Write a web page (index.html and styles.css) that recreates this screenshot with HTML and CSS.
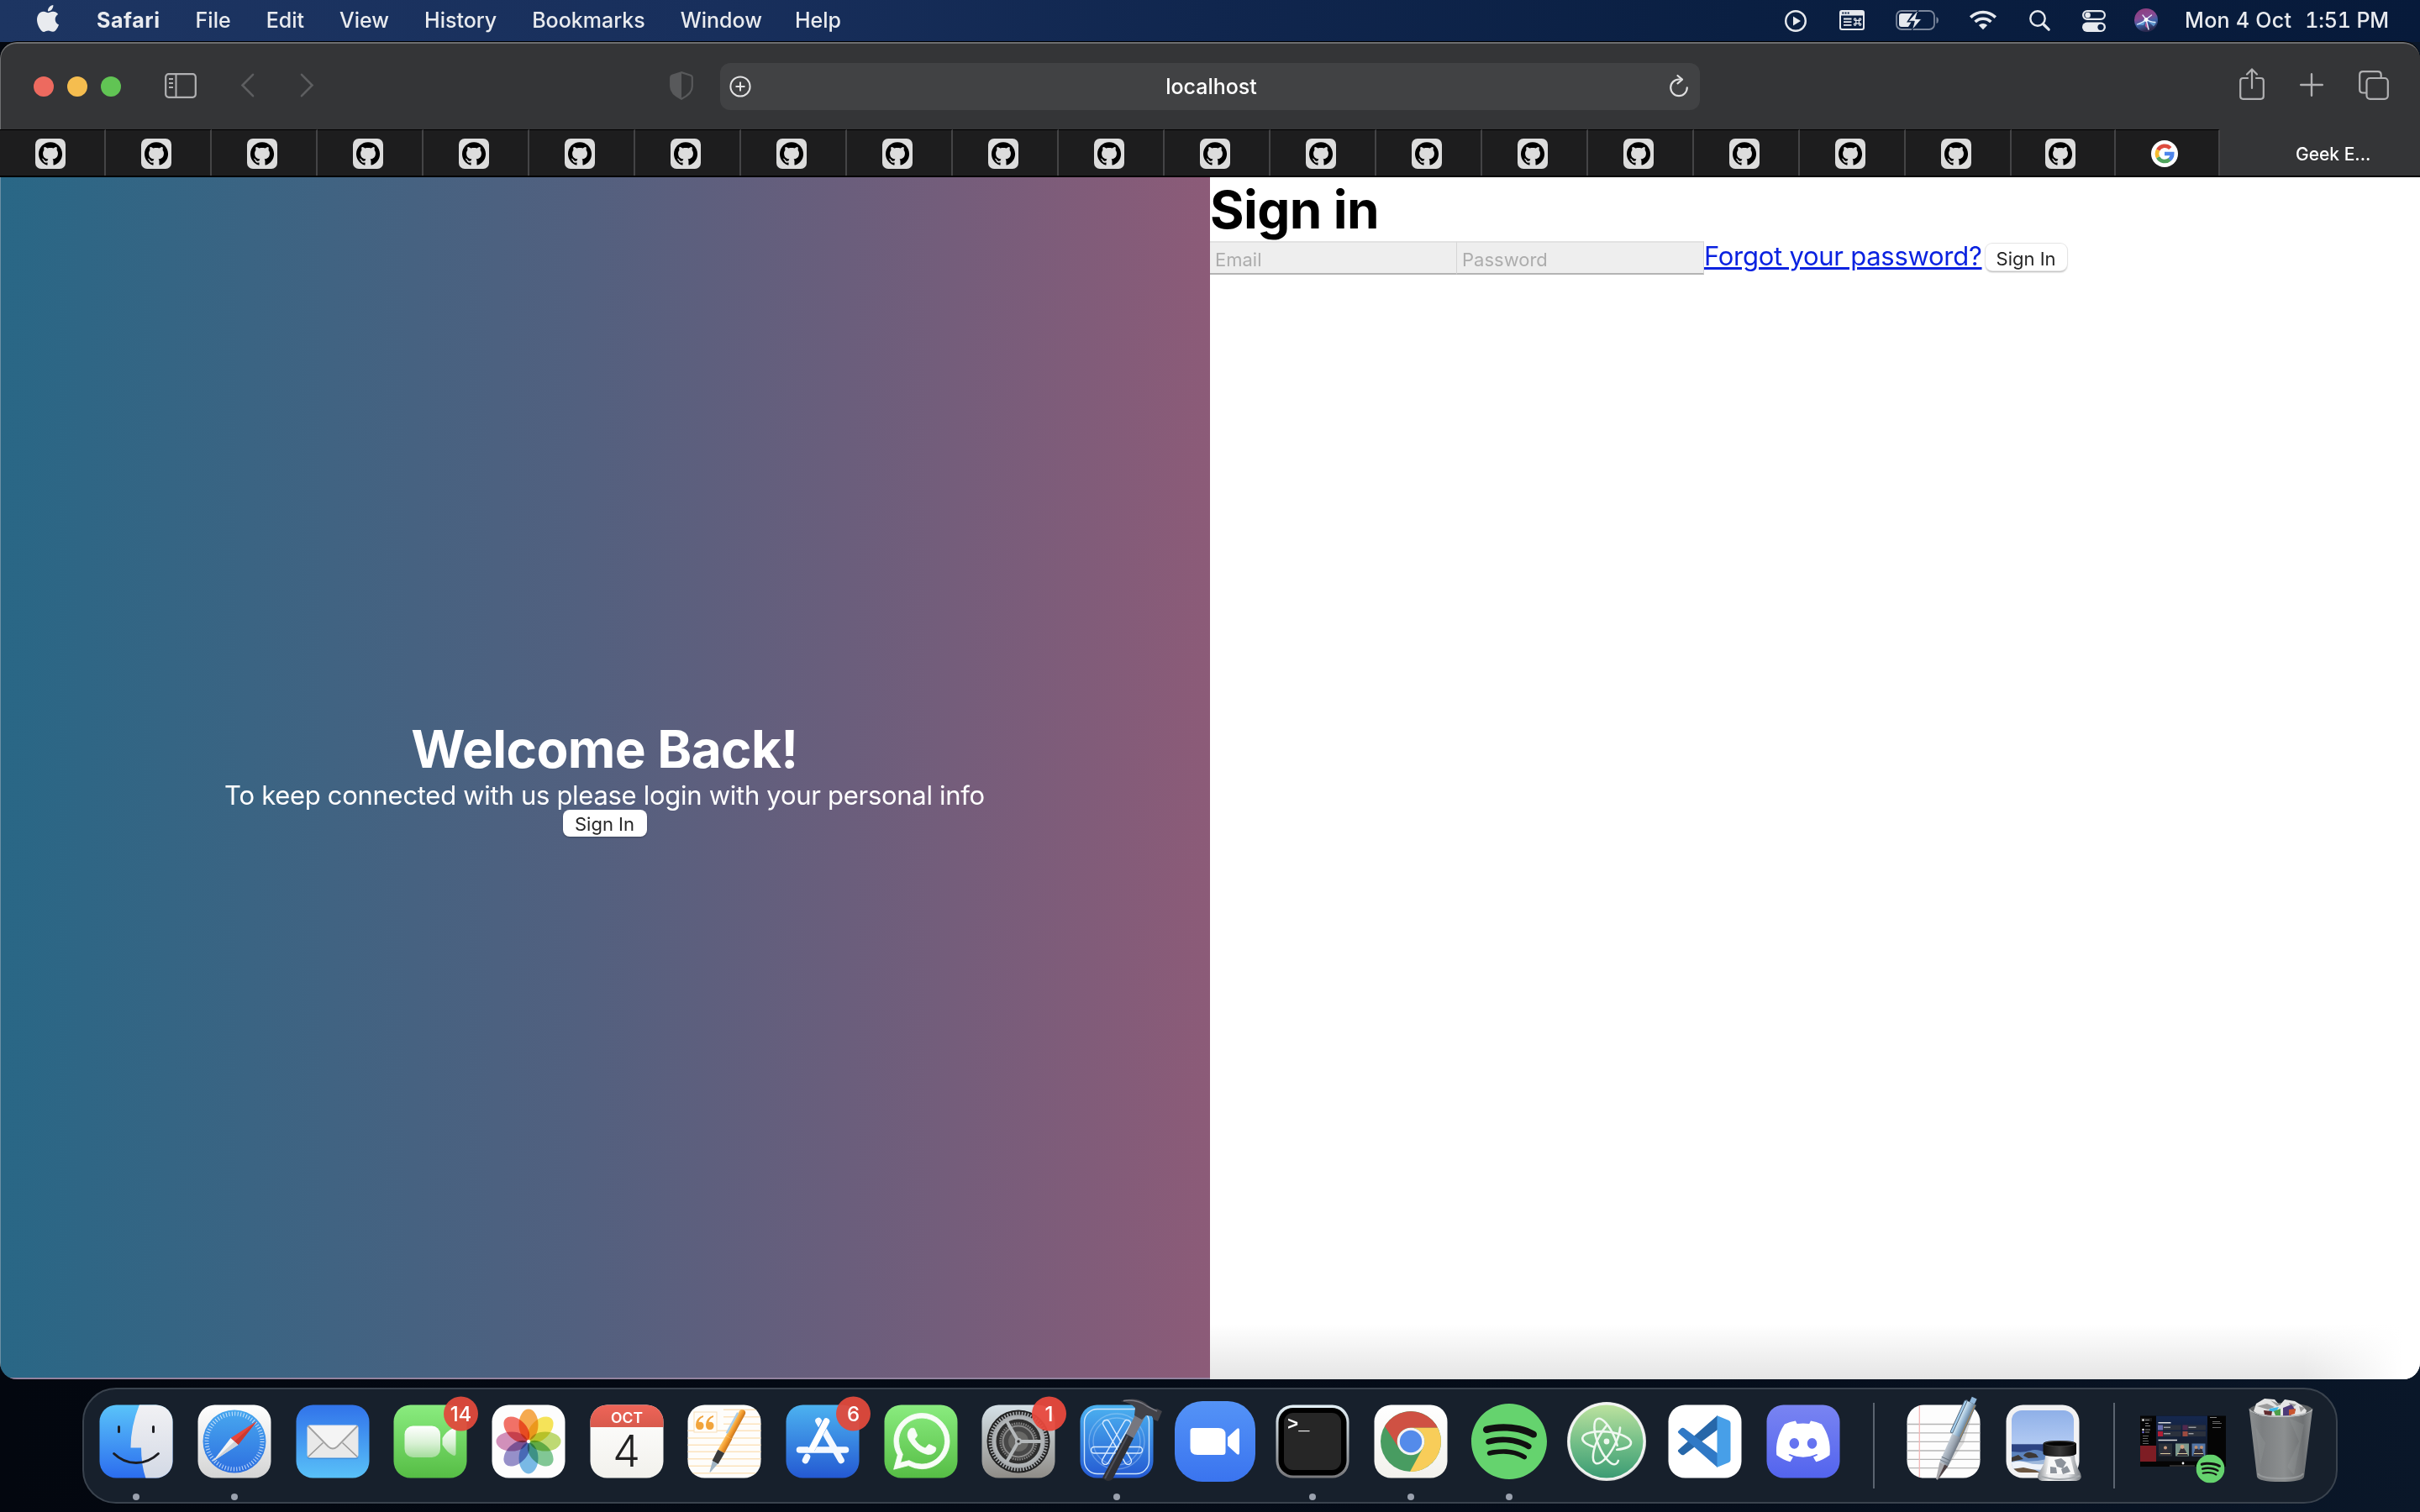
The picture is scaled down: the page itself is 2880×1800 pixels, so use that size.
FILE: index.html
```html
<!DOCTYPE html>
<html lang="en">
<head>
<meta charset="utf-8">
<title>Geek E...</title>
<link rel="stylesheet" href="styles.css">
</head>
<body>
<svg class="defs" width="0" height="0" aria-hidden="true">
  <defs>
    <symbol id="octocat" viewBox="0 0 36 36">
      <rect width="36" height="36" rx="7" fill="#dcdcdc"/>
      <path transform="translate(4 3.9) scale(1.17)" d="M12 .297c-6.63 0-12 5.373-12 12 0 5.303 3.438 9.8 8.205 11.385.6.113.82-.258.82-.577 0-.285-.01-1.04-.015-2.04-3.338.724-4.042-1.61-4.042-1.61C4.422 18.07 3.633 17.7 3.633 17.7c-1.087-.744.084-.729.084-.729 1.205.084 1.838 1.236 1.838 1.236 1.07 1.835 2.809 1.305 3.495.998.108-.776.417-1.305.76-1.605-2.665-.3-5.466-1.332-5.466-5.93 0-1.31.465-2.38 1.235-3.22-.135-.303-.54-1.523.105-3.176 0 0 1.005-.322 3.3 1.23.96-.267 1.98-.399 3-.405 1.02.006 2.04.138 3 .405 2.28-1.552 3.285-1.23 3.285-1.23.645 1.653.24 2.873.12 3.176.765.84 1.23 1.91 1.23 3.22 0 4.61-2.805 5.625-5.475 5.92.42.36.81 1.096.81 2.22 0 1.606-.015 2.896-.015 3.286 0 .315.21.69.825.57C20.565 22.092 24 17.592 24 12.297c0-6.627-5.373-12-12-12"/>
    </symbol>
    <symbol id="spotify" viewBox="0 0 24 24">
      <circle cx="12" cy="12" r="11.6" fill="#111"/>
      <path fill="#65d36e" d="M12 0C5.4 0 0 5.4 0 12s5.4 12 12 12 12-5.4 12-12S18.66 0 12 0zm5.521 17.34c-.24.359-.66.48-1.021.24-2.82-1.74-6.36-2.101-10.561-1.141-.418.122-.779-.179-.899-.539-.12-.421.18-.78.54-.9 4.56-1.021 8.52-.6 11.64 1.32.42.18.479.659.301 1.02zm1.44-3.3c-.301.42-.841.6-1.262.3-3.239-1.98-8.159-2.58-11.939-1.38-.479.12-1.02-.12-1.14-.6-.12-.48.12-1.021.6-1.141C9.6 9.9 15 10.561 18.72 12.84c.361.181.54.78.241 1.2zm.12-3.36C15.24 8.4 8.82 8.16 5.16 9.301c-.6.179-1.2-.181-1.38-.721-.18-.601.18-1.2.72-1.381 4.26-1.26 11.28-1.02 15.721 1.621.539.3.719 1.02.419 1.56-.299.421-1.02.599-1.559.3z"/>
    </symbol>
    <linearGradient id="gFinder" x2="0" y2="1"><stop stop-color="#5ac4fa"/><stop offset="1" stop-color="#2b6cee"/></linearGradient>
    <linearGradient id="gFace" x2="0" y2="1"><stop stop-color="#f1f1f4"/><stop offset="1" stop-color="#d3d9e5"/></linearGradient>
    <linearGradient id="gWhite" x2="0" y2="1"><stop stop-color="#fff"/><stop offset="1" stop-color="#d4d4d4"/></linearGradient>
    <linearGradient id="gPaper" x2="0" y2="1"><stop stop-color="#fff"/><stop offset="1" stop-color="#f2f1ec"/></linearGradient>
    <linearGradient id="gCompass" x2="0" y2="1"><stop stop-color="#48a8ef"/><stop offset="1" stop-color="#2d6fe0"/></linearGradient>
    <linearGradient id="gMail" x2="0" y2="1"><stop stop-color="#3173ea"/><stop offset="1" stop-color="#59c1f8"/></linearGradient>
    <linearGradient id="gGreen" x2="0" y2="1"><stop stop-color="#8aec7f"/><stop offset="1" stop-color="#56bd45"/></linearGradient>
    <linearGradient id="gCam" x2="0" y2="1"><stop stop-color="#fff"/><stop offset=".55" stop-color="#d9f1d5"/><stop offset="1" stop-color="#a5dd9c"/></linearGradient>
    <linearGradient id="gRed" x2="0" y2="1"><stop stop-color="#ef6559"/><stop offset="1" stop-color="#d85a4c"/></linearGradient>
    <linearGradient id="gStore" x2="0" y2="1"><stop stop-color="#4cb2f0"/><stop offset="1" stop-color="#2459d2"/></linearGradient>
    <linearGradient id="gZoom" x2="0" y2="1"><stop stop-color="#5493f7"/><stop offset="1" stop-color="#3a74ef"/></linearGradient>
    <linearGradient id="gPrefs" x2="0" y2="1"><stop stop-color="#d5e1e8"/><stop offset="1" stop-color="#8f8c87"/></linearGradient>
    <linearGradient id="gMetal" x2="0" y2="1"><stop stop-color="#e3f0f7"/><stop offset="1" stop-color="#77777a"/></linearGradient>
    <linearGradient id="gAtom" x2="0" y2="1"><stop stop-color="#bce29f"/><stop offset=".55" stop-color="#6fbc86"/><stop offset="1" stop-color="#3c9c74"/></linearGradient>
    <linearGradient id="gDiscord" x2="0" y2="1"><stop stop-color="#7984f2"/><stop offset="1" stop-color="#5364ee"/></linearGradient>
    <linearGradient id="gPen"><stop stop-color="#fbc667"/><stop offset=".5" stop-color="#f39b2d"/><stop offset="1" stop-color="#c8741c"/></linearGradient>
    <linearGradient id="gSteel"><stop stop-color="#d8ecf8"/><stop offset=".5" stop-color="#8fb0cc"/><stop offset="1" stop-color="#5b6b7b"/></linearGradient>
    <linearGradient id="gGrip"><stop stop-color="#c2cbd5"/><stop offset=".6" stop-color="#98a2ae"/><stop offset="1" stop-color="#6c7580"/></linearGradient>
    <linearGradient id="gSky" x2="0" y2="1"><stop stop-color="#8fb0e8"/><stop offset="1" stop-color="#b3cbf3"/></linearGradient>
    <linearGradient id="gBin"><stop stop-color="#8c8f91"/><stop offset=".2" stop-color="#7c7f81"/><stop offset=".55" stop-color="#8c8f90"/><stop offset=".85" stop-color="#6d7072"/><stop offset="1" stop-color="#8e9193"/></linearGradient>
    <linearGradient id="gGlass"><stop stop-color="#8b8f94"/><stop offset=".25" stop-color="#f1f1f1"/><stop offset=".7" stop-color="#e3e5e8"/><stop offset="1" stop-color="#777b80"/></linearGradient>
    <linearGradient id="gCap"><stop stop-color="#111"/><stop offset=".5" stop-color="#3b3b3b"/><stop offset="1" stop-color="#080808"/></linearGradient>
    <linearGradient id="gHero" x2="0" y2="1"><stop stop-color="#15284f"/><stop offset="1" stop-color="#14171d"/></linearGradient>
    <linearGradient id="gSiri" x2=".3" y2="1"><stop stop-color="#8c3a78"/><stop offset=".45" stop-color="#8a4a94"/><stop offset=".7" stop-color="#3c63a8"/><stop offset="1" stop-color="#2c2a50"/></linearGradient>
  </defs>
</svg>

<header class="menubar">
  <nav class="menus">
    <svg class="apple" width="26" height="32" viewBox="2.2 0 19.6 24"><path fill="#e9ebef" d="M12.152 6.896c-.948 0-2.415-1.078-3.96-1.04-2.04.027-3.91 1.183-4.961 3.014-2.117 3.675-.546 9.103 1.519 12.09 1.013 1.454 2.208 3.09 3.792 3.039 1.52-.065 2.09-.987 3.935-.987 1.831 0 2.35.987 3.96.948 1.637-.026 2.676-1.48 3.676-2.948 1.156-1.688 1.636-3.325 1.662-3.415-.039-.013-3.182-1.221-3.22-4.857-.026-3.04 2.48-4.494 2.597-4.559-1.429-2.09-3.623-2.324-4.39-2.376-2-.156-3.675 1.09-4.61 1.09zM15.53 3.83c.843-1.012 1.4-2.427 1.245-3.83-1.207.052-2.662.805-3.532 1.818-.78.896-1.454 2.338-1.273 3.714 1.338.104 2.715-.688 3.559-1.701"/></svg>
    <b class="m-app">Safari</b><span class="m-file">File</span><span class="m-edit">Edit</span><span class="m-view">View</span><span class="m-history">History</span><span class="m-bookmarks">Bookmarks</span><span class="m-window">Window</span><span class="m-help">Help</span>
  </nav>
  <div class="status">
    <svg width="26" height="26" viewBox="0 0 26 26"><circle cx="13" cy="13" r="11.8" fill="none" stroke="#e6e9ee" stroke-width="2.4"/><path d="M10 7.6 19 13l-9 5.4z" fill="#e6e9ee"/></svg>
    <svg class="s-keys" width="30" height="24" viewBox="0 0 30 24"><path fill="#e6e9ee" fill-rule="evenodd" d="M3 0h24a3 3 0 0 1 3 3v18a3 3 0 0 1-3 3H3a3 3 0 0 1-3-3V3a3 3 0 0 1 3-3zM2 6.6V20.500a1.500 1.500 0 0 0 1.500 1.500h23a1.500 1.500 0 0 0 1.500-1.500V6.600zM3.300 2.400v2h2v-2zM6.500 2.400v2h2v-2zM9.700 2.400v2h2v-2z"/><path d="M5 10.500h9.500M5 14.200h9.500M5 17.800h9.500" stroke="#e6e9ee" stroke-width="1.800"/><path d="M19.800 12.300h3.600v3.600h-3.600zM19.800 12.300h-1.200a1.200 1.200 0 1 1 1.200-1.200zM23.400 12.300v-1.200a1.200 1.200 0 1 1 1.200 1.200zM23.400 15.900h1.200a1.200 1.200 0 1 1-1.200 1.200zM19.800 15.900v1.200a1.200 1.200 0 1 1-1.200-1.200z" fill="none" stroke="#e6e9ee" stroke-width="1.200"/></svg>
    <svg class="s-battery" width="52" height="26" viewBox="0 0 52 26"><rect x="1" y="2" width="45" height="22" rx="6" fill="none" stroke="#7b879c" stroke-width="1.800"/><path d="M48.500 9v8q2.500-1 2.500-4t-2.500-4z" fill="#7b879c"/><path d="M7 5h13l-7 10.500h5.500L15 21H7q-3 0-3-3V8q0-3 3-3z" fill="#e6e9ee"/><path d="M27 .800 15 14.300h7.300L19.400 25 31 11.400h-7.300z" fill="#e6e9ee" stroke="#0a1f42" stroke-width="1"/></svg>
    <svg class="s-wifi" width="34" height="25" viewBox="0 0 34 25"><g fill="none" stroke="#e6e9ee" stroke-width="3.600"><path d="M2.200 9.600a21 21 0 0 1 29.600 0"/><path d="M7.600 15.100a13.300 13.300 0 0 1 18.800 0"/></g><path d="M17 24.200 11.900 19a7.200 7.200 0 0 1 10.200 0z" fill="#e6e9ee"/></svg>
    <svg class="s-search" width="25" height="25" viewBox="0 0 25 25"><circle cx="10" cy="10" r="8.700" fill="none" stroke="#e6e9ee" stroke-width="2.400"/><path d="m16.500 16.500 6.700 6.700" stroke="#e6e9ee" stroke-width="3.200" stroke-linecap="round"/></svg>
    <svg class="s-control" width="28" height="26" viewBox="0 0 28 26"><rect x="1.100" y="1.100" width="25.800" height="9.800" rx="4.900" fill="none" stroke="#e6e9ee" stroke-width="2.200"/><circle cx="6.600" cy="6" r="3.300" fill="#e6e9ee"/><rect y="14.600" width="28" height="11.400" rx="5.700" fill="#e6e9ee"/><circle cx="22" cy="20.300" r="3.600" fill="#0a1f42"/></svg>
    <svg class="s-siri" width="28" height="28" viewBox="0 0 28 28"><circle cx="14" cy="14" r="14" fill="url(#gSiri)"/><path d="M14 13 3 19.500l8 .500zM14 13l12 4.500-3 4z" fill="#6fb2e6" opacity=".75"/><path d="m14 13 3.500 12.500L13 21z" fill="#e0599a" opacity=".8"/><path d="M3.500 19Q11 16.500 14 13q4 3 11 3.500M14 13 10 8m4 5 6.500-5M14 13l3 12" fill="none" stroke="#e4f2ff" stroke-width="1.300" stroke-linecap="round"/><circle cx="14" cy="13.500" r="2.400" fill="#fff"/></svg>
    <span class="m-date">Mon 4 Oct</span><span class="m-time">1:51 PM</span>
  </div>
</header>

<main class="window">
  <div class="toolbar">
    <div class="tools-left">
      <i class="light red"></i><i class="light amber"></i><i class="light green"></i>
      <svg class="t-sidebar" width="38" height="30" viewBox="0 0 38 30" fill="none" stroke="#b1b1b3"><rect x="1.200" y="1.200" width="35.600" height="27.600" rx="3.500" stroke-width="2.200"/><path d="M13.500 1v28" stroke-width="2"/><path d="M5 7h5M5 12h5M5 17h5" stroke-width="1.800"/></svg>
      <svg class="t-back" width="17" height="29" viewBox="0 0 17 29"><path d="M15 1.800 2.500 14.500 15 27.200" fill="none" stroke="#5d5e60" stroke-width="2.600" stroke-linecap="round"/></svg>
      <svg class="t-fwd" width="17" height="29" viewBox="0 0 17 29"><path d="M2 1.800 14.500 14.500 2 27.200" fill="none" stroke="#5d5e60" stroke-width="2.600" stroke-linecap="round"/></svg>
    </div>
    <svg class="t-shield" width="28" height="34" viewBox="0 0 28 34"><path d="M14 1.200 3 4.800Q1.200 5.500 1.200 7.300V18q0 8.500 12.800 14.700Q26.800 26.500 26.800 18V7.300q0-1.800-1.800-2.500z" fill="none" stroke="#58595b" stroke-width="2.200"/><path d="M14 1 3 4.800Q1 5.500 1 7.300V18q0 8.500 13 15z" fill="#58595b"/></svg>
    <div class="address">
      <svg width="26" height="26" viewBox="0 0 26 26" fill="none" stroke="#e2e2e3"><circle cx="13" cy="13" r="11.600" stroke-width="2"/><path d="M13 7.500v11M7.500 13h11" stroke-width="2"/></svg>
      <span class="url">localhost</span>
      <svg width="26" height="28" viewBox="0 0 26 28"><path d="M14 5.500h-1a9.800 9.800 0 1 0 9.800 9.800" fill="none" stroke="#dededf" stroke-width="2.200" stroke-linecap="round"/><path d="m11.500 1 5.500 4.700-5.500 4.600" fill="none" stroke="#dededf" stroke-width="2.200" stroke-linecap="round" stroke-linejoin="round"/></svg>
    </div>
    <div class="tools-right">
      <svg class="t-share" width="30" height="38" viewBox="0 0 30 38" fill="none" stroke="#b1b1b3" stroke-width="2.200" stroke-linecap="round"><path d="M10 12H4.500q-3.300 0-3.300 3.300v18.200q0 3.300 3.300 3.300h21q3.300 0 3.300-3.300V15.300q0-3.300-3.300-3.300H20"/><path d="M15 24V2M9 7.500l6-6 6 6"/></svg>
      <svg class="t-plus" width="28" height="28" viewBox="0 0 28 28"><path d="M14 1.200v25.600M1.200 14h25.600" stroke="#b1b1b3" stroke-width="2.400" stroke-linecap="round"/></svg>
      <svg class="t-tabs" width="36" height="35" viewBox="0 0 36 35" fill="none" stroke="#b1b1b3" stroke-width="2.200"><rect x="9.500" y="9" width="25.300" height="24.800" rx="4"/><path d="M9 26.500H5.200q-4 0-4-4V5.200q0-4 4-4h17.500q4 0 4 4V9"/></svg>
    </div>
  </div>

  <div class="tabs">
    <div class="tab"><svg><use href="#octocat"/></svg></div><div class="tab"><svg><use href="#octocat"/></svg></div><div class="tab"><svg><use href="#octocat"/></svg></div><div class="tab"><svg><use href="#octocat"/></svg></div><div class="tab"><svg><use href="#octocat"/></svg></div><div class="tab"><svg><use href="#octocat"/></svg></div><div class="tab"><svg><use href="#octocat"/></svg></div><div class="tab"><svg><use href="#octocat"/></svg></div><div class="tab"><svg><use href="#octocat"/></svg></div><div class="tab"><svg><use href="#octocat"/></svg></div><div class="tab"><svg><use href="#octocat"/></svg></div><div class="tab"><svg><use href="#octocat"/></svg></div><div class="tab"><svg><use href="#octocat"/></svg></div><div class="tab"><svg><use href="#octocat"/></svg></div><div class="tab"><svg><use href="#octocat"/></svg></div><div class="tab"><svg><use href="#octocat"/></svg></div><div class="tab"><svg><use href="#octocat"/></svg></div><div class="tab"><svg><use href="#octocat"/></svg></div><div class="tab"><svg><use href="#octocat"/></svg></div>
    <div class="tab narrow"><svg><use href="#octocat"/></svg></div>
    <div class="tab narrow"><svg viewBox="0 0 36 36"><circle cx="18" cy="18" r="16" fill="#fff"/><g fill="none" stroke-width="4.600"><path d="M10.100 13.600A9.200 9.200 0 0 1 24.800 11.500" stroke="#dd4b3e"/><path d="M10.100 22.400a9.200 9.200 0 0 1 0-8.800" stroke="#f6bc2f"/><path d="M24.200 24.700a9.200 9.200 0 0 1-14.100-2.300" stroke="#4fa45c"/><path d="M18 18h9.200a9.200 9.200 0 0 1-3.200 7" stroke="#4f86ec"/></g></svg></div>
    <div class="tab active"><span>Geek E...</span></div>
  </div>

  <div class="page">
    <section class="welcome">
      <h1>Welcome Back!</h1>
      <p>To keep connected with us please login with your personal info</p>
      <button class="btn btn-welcome">Sign In</button>
    </section>
    <section class="signin">
      <h1>Sign in</h1>
      <div class="form">
        <div class="field"><span class="f-email">Email</span></div><div class="field"><span class="f-pass">Password</span></div><a>Forgot your password?</a><button class="btn btn-form">Sign In</button>
      </div>
    </section>
  </div>
</main>

<footer class="dock">
  <div class="item running"><svg viewBox="-58 -60 116 120">
    <clipPath id="sq"><rect x="-43.500" y="-43.500" width="87" height="87" rx="20"/></clipPath>
    <g clip-path="url(#sq)"><rect x="-44" y="-44" width="88" height="88" fill="url(#gFinder)"/><path d="M4-44Q-6.500-18-6.500 7.500H6Q6 28 11.500 44H44V-44z" fill="url(#gFace)"/></g>
    <path d="M-20.500-17.500v6M20.500-17.500v6M-26.400 14.500Q-15 25.500 0 25.500T26.400 14.500" fill="none" stroke="#1c1d22" stroke-width="3" stroke-linecap="round"/></svg><i class="dot"></i></div>
  <div class="item running"><svg viewBox="-58 -60 116 120"><rect x="-43.500" y="-43.500" width="87" height="87" rx="20" fill="url(#gWhite)"/><circle r="37.500" fill="url(#gCompass)"/><circle r="33" fill="none" stroke="#e4f0fd" stroke-width="5" stroke-dasharray="1 2.456" opacity=".85"/><path d="M26.500-24-4.500-4 4.500 4z" fill="#e8453a"/><path d="M-26 24-4.500-4 4.500 4z" fill="#f4f4f4"/><path d="M26.500-24 0 0l4.500 4z" fill="#c93a32"/><path d="M-26 24 0 0l4.500 4z" fill="#cfd3d8"/></svg><i class="dot"></i></div>
  <div class="item"><svg viewBox="-58 -60 116 120"><rect x="-43.500" y="-43.500" width="87" height="87" rx="20" fill="url(#gMail)"/><rect x="-30.500" y="-17" width="61" height="38" rx="3.500" fill="#1c56a8" opacity=".35"/><rect x="-30.500" y="-19.500" width="61" height="39" rx="3.500" fill="#e9e9e9"/><path d="M-29.500 18.500-11.500 1.500M29.500 18.500 11.500 1.500" stroke="#999" stroke-width="1.600"/><path d="M-29.500-18.500-5.500 6Q0 11 5.500 6L29.500-18.500" fill="#f4f4f4" stroke="#a2a2a2" stroke-width="1.800"/></svg></div>
  <div class="item"><svg viewBox="-58 -60 116 120"><rect x="-43.500" y="-43.500" width="87" height="87" rx="20" fill="url(#gGreen)"/><rect x="-30.500" y="-18.500" width="42.500" height="37.500" rx="10" fill="url(#gCam)"/><path d="M14.500-4Q20-13 27-15.500 30.500-16 30.500-13V14.500Q30.500 18 27 16.500 20 13 14.500 4z" fill="url(#gCam)"/><circle cx="36.500" cy="-33" r="20.500" fill="#e04a3c" fill-opacity=".95"/><text class="badge" x="36.500" y="-24.300">14</text></svg></div>
  <div class="item"><svg viewBox="-58 -60 116 120"><rect x="-43.500" y="-43.500" width="87" height="87" rx="20" fill="#fdfdfd"/><g class="petals"><ellipse cy="-20" rx="11.500" ry="18.500" fill="#f5a340"/><ellipse cy="-20" rx="11.500" ry="18.500" fill="#f5e14b" transform="rotate(45)"/><ellipse cy="-20" rx="11.500" ry="18.500" fill="#b9d667" transform="rotate(90)"/><ellipse cy="-20" rx="11.500" ry="18.500" fill="#76c28c" transform="rotate(135)"/><ellipse cy="-20" rx="11.500" ry="18.500" fill="#6db3e3" transform="rotate(180)"/><ellipse cy="-20" rx="11.500" ry="18.500" fill="#8d87c5" transform="rotate(225)"/><ellipse cy="-20" rx="11.500" ry="18.500" fill="#cd86b4" transform="rotate(270)"/><ellipse cy="-20" rx="11.500" ry="18.500" fill="#f0655a" transform="rotate(315)"/></g><circle r="2" fill="#fff"/></svg></div>
  <div class="item"><svg viewBox="-58 -60 116 120"><g clip-path="url(#sq)"><rect x="-44" y="-44" width="88" height="88" fill="url(#gPaper)"/><rect x="-44" y="-44" width="88" height="27" fill="url(#gRed)"/></g><text class="cal-month" x="0" y="-22.500">OCT</text><text class="cal-day" x="-.500" y="30">4</text></svg></div>
  <div class="item"><svg viewBox="-58 -60 116 120"><g clip-path="url(#sq)"><rect x="-44" y="-44" width="88" height="88" fill="#fefdfb"/><path d="M-1-37.700h45M-1-29.300h45M-1-20.700h45M-44-12.700h88M-44-4h88M-44 4.300h88M-44 12.300h88M-44 20.700h88M-44 29.300h88M-44 37.700h88" stroke="#fbe3bd" stroke-width="1.400"/></g><rect x="-36" y="-35" width="27" height="24" fill="#fffdf9" stroke="#f8dfb8"/><g fill="#f1a43c"><path d="M-25-31q-9 3-9 11 0 6 4.800 6 4.700 0 4.700-4.700 0-4.500-4.500-4.600-1 0-1.500.200 .5-3.900 5.500-5.900z"/><path transform="translate(12 0)" d="M-25-31q-9 3-9 11 0 6 4.800 6 4.700 0 4.700-4.700 0-4.500-4.500-4.600-1 0-1.500.200 .5-3.900 5.500-5.900z"/></g><g transform="translate(22.500 -36.500) rotate(28.500)"><path d="M-4 3Q-4-1 0-1T4 3V36H-4z" fill="url(#gPen)"/><path d="M-4 36H4.500V55H-4.500z" fill="url(#gPen)"/><path d="M-4.500 55h9L4 70h-8z" fill="#3a3a3a"/><path d="M-3.500 70h7L.5 83h-1z" fill="#9fb4c4"/><path d="M-4.500 5v28" stroke="#a9cde8" stroke-width="2.500"/></g></svg></div>
  <div class="item"><svg viewBox="-58 -60 116 120"><rect x="-43.500" y="-43.500" width="87" height="87" rx="20" fill="url(#gStore)"/><g stroke="#f5f9ff" stroke-width="7.600" stroke-linecap="round"><path d="M-5-24.500 22 22.500M-27.500 10H27.500" /><path d="M-18.500 18.500-20.500 22.500"/></g><path d="M4.500-24.500-13.500 9" stroke="#3b8ce6" stroke-width="9"/><path d="M4.500-24-12.500 8.500" stroke="#fff" stroke-width="7.600" stroke-linecap="round"/><circle cx="36.500" cy="-33" r="20.500" fill="#e04a3c" fill-opacity=".95"/><text class="badge" x="36.500" y="-24.300">6</text></svg></div>
  <div class="item"><svg viewBox="-58 -60 116 120"><rect x="-43.500" y="-43.500" width="87" height="87" rx="20" fill="url(#gGreen)"/><path transform="translate(-32.500 -33.500) scale(2.780)" fill="#f8fdf7" stroke="#f8fdf7" stroke-width=".3" d="M17.472 14.382c-.297-.149-1.758-.867-2.03-.967-.273-.099-.471-.148-.67.15-.197.297-.767.966-.94 1.164-.173.199-.347.223-.644.075-.297-.15-1.255-.463-2.39-1.475-.883-.788-1.48-1.761-1.653-2.059-.173-.297-.018-.458.13-.606.134-.133.298-.347.446-.52.149-.174.198-.298.298-.497.099-.198.05-.371-.025-.52-.075-.149-.669-1.612-.916-2.207-.242-.579-.487-.5-.669-.51-.173-.008-.371-.01-.57-.01-.198 0-.52.074-.792.372-.272.297-1.040 1.016-1.040 2.479 0 1.462 1.065 2.875 1.213 3.074.149.198 2.096 3.200 5.077 4.487.709.306 1.262.489 1.694.625.712.227 1.360.195 1.871.118.571-.085 1.758-.719 2.006-1.413.248-.694.248-1.289.173-1.413-.074-.124-.272-.198-.570-.347m-5.421 7.403h-.004a9.870 9.870 0 01-5.031-1.378l-.361-.214-3.741.982.998-3.648-.235-.374a9.860 9.860 0 01-1.510-5.260c.001-5.450 4.436-9.884 9.888-9.884 2.640 0 5.122 1.030 6.988 2.898a9.825 9.825 0 012.893 6.994c-.003 5.450-4.437 9.884-9.885 9.884m8.413-18.297A11.815 11.815 0 0012.050 0C5.495 0 .160 5.335.157 11.892c0 2.096.547 4.142 1.588 5.945L.057 24l6.305-1.654a11.882 11.882 0 005.683 1.448h.005c6.554 0 11.890-5.335 11.893-11.893a11.821 11.821 0 00-3.480-8.413z"/></svg></div>
  <div class="item"><svg viewBox="-58 -60 116 120"><rect x="-43.500" y="-43.500" width="87" height="87" rx="20" fill="url(#gPrefs)"/><circle r="37.500" fill="#222"/><circle r="33.500" fill="none" stroke="#a6aaad" stroke-width="4" stroke-dasharray="1.700 1.808"/><circle r="30" fill="none" stroke="#a9adb0" stroke-width="3.500"/><circle r="27" fill="#2e2e2e"/><circle r="21.500" fill="#3c3c3c" stroke="#858585" stroke-width="2.500" stroke-dasharray="1.500 1.300"/><circle r="18.500" fill="#484848" stroke="#8a8a8a" stroke-width="2"/><circle r="12" fill="#686866"/><path d="M0 0H30M0 0-15-26M0 0-15 26" stroke="#b4b8ba" stroke-width="4"/><circle r="28" fill="none" stroke="#b0b4b6" stroke-width="3"/><circle r="4" fill="#b4b8ba"/><circle r="1.700" fill="#333"/><circle cx="36.500" cy="-33" r="20.500" fill="#e8493d" fill-opacity=".95"/><text class="badge" x="36.500" y="-24.300">1</text></svg></div>
  <div class="item running"><svg viewBox="-58 -60 116 120"><rect x="-43.500" y="-43.500" width="87" height="87" rx="20" fill="url(#gStore)"/><g fill="none" stroke="#cfe6fb" stroke-width="1.400"><rect x="-38.500" y="-38.500" width="77" height="77" rx="15.500"/><circle r="33" opacity=".35"/><circle r="28" opacity=".35"/><g stroke="#d9ecff"><rect x="-30.500" y="6.500" width="61" height="7.500" rx="3.700"/><rect x="-4" y="-29" width="8" height="60" rx="4" transform="rotate(30)"/><rect x="-4" y="-29" width="8" height="60" rx="4" transform="rotate(-30)"/></g></g><path d="M24-36 34-30 20-4 11-9z" fill="#77777f"/><path d="M11-9 20-4-5 45Q-11 50-17 43z" fill="#303035"/><path d="m13-7-27 51" stroke="#505058" stroke-width="2"/><path d="M4.500-48Q22-54 34-46l7 6 3 2 4-1 6 3-5 12-5-2-2-4-7-1-5 5-9-5 1-9Q17-46 4.500-48z" fill="#424248"/><path d="M8-48.500Q24-51 36-42l12 6" fill="none" stroke="#7b7b84" stroke-width="1.500"/></svg><i class="dot"></i></div>
  <div class="item"><svg viewBox="-58 -60 116 120"><rect x="-48" y="-48" width="96" height="96" rx="33" fill="url(#gZoom)"/><path d="M-29.500-12.500Q-29.500-16-26-16H4Q12.500-16 12.500-8V12.500Q12.500 16 9 16H-21Q-29.500 16-29.500 8zM15-5 26-15Q29-17 29-13V13Q29 17 26 15L15 5z" fill="#fff"/></svg></div>
  <div class="item running"><svg viewBox="-58 -60 116 120"><rect x="-43.500" y="-43.500" width="87" height="87" rx="20" fill="url(#gMetal)"/><rect x="-40.500" y="-40" width="81" height="80.500" rx="17.500" fill="#000"/><rect x="-34" y="-34" width="68" height="68" rx="11" fill="#262626"/><text class="prompt" x="-30" y="-14">&gt;_</text></svg><i class="dot"></i></div>
  <div class="item running"><svg viewBox="-58 -60 116 120"><rect x="-43.500" y="-43.500" width="87" height="87" rx="20" fill="url(#gPaper)"/><circle r="36" fill="#489c61"/><path d="M0-16.300H32A36 36 0 0 0-31-18L-14.100 8.150A16.300 16.300 0 0 1 0-16.300z" fill="#cf5143"/><path d="M0-16.300H32A36 36 0 0 1-1 36L14.100 8.150A16.300 16.300 0 0 0 0-16.300z" fill="#f8cd59"/><circle r="16.300" fill="#f4f4f4"/><circle r="13.200" fill="#548bea"/></svg><i class="dot"></i></div>
  <div class="item running"><svg viewBox="-58 -60 116 120"><use href="#spotify" x="-45" y="-45" width="90" height="90"/></svg><i class="dot"></i></div>
  <div class="item"><svg viewBox="-58 -60 116 120"><circle r="47" fill="#dcdedc"/><circle r="46" cy="-.500" fill="#f3f4f3"/><circle r="43.500" fill="url(#gAtom)"/><g fill="none" stroke="#eff8f0" stroke-width="2.600" stroke-linecap="round"><ellipse rx="29" ry="10.500" cy="-1" transform="rotate(6)" pathLength="100" stroke-dasharray="79 21" stroke-dashoffset="-36"/><ellipse rx="29" ry="10.500" transform="rotate(68)" pathLength="100" stroke-dasharray="86 14" stroke-dashoffset="-96"/><ellipse rx="29" ry="10.500" transform="rotate(-63)" pathLength="100" stroke-dasharray="80 20" stroke-dashoffset="-8"/></g><circle r="3.400" fill="#eff8f0"/></svg></div>
  <div class="item"><svg viewBox="-58 -60 116 120"><rect x="-43.500" y="-43.500" width="87" height="87" rx="20" fill="#fff"/><path d="M15-31V-14L-25 16Q-27 17-29 15L-31.500 12.500Q-33 11-31 9.500z" fill="#2767a9"/><path d="M15 31V14L-25-16Q-27-17-29-15L-31.500-12.500Q-33-11-31-9.500z" fill="#3079c6"/><path d="M14.500-30.700 28.500-25Q30.500-24 30.500-22V22Q30.500 24 28.500 25L14.500 30.700z" fill="#479fe8"/></svg></div>
  <div class="item"><svg viewBox="-58 -60 116 120"><rect x="-43.500" y="-43.500" width="87" height="87" rx="20" fill="url(#gDiscord)"/><path transform="translate(-32 -32) scale(2.660)" fill="#fff" d="M20.317 4.370a19.791 19.791 0 00-4.885-1.515.074.074 0 00-.079.037c-.211.375-.445.865-.608 1.250-1.845-.276-3.680-.276-5.487 0-.164-.393-.406-.874-.618-1.250a.077.077 0 00-.079-.037 19.736 19.736 0 00-4.885 1.515.070.070 0 00-.032.028C.533 9.046-.319 13.580.099 18.058a.082.082 0 00.031.056c2.053 1.508 4.041 2.423 5.993 3.029a.078.078 0 00.084-.028c.462-.630.873-1.295 1.226-1.994a.076.076 0 00-.042-.106c-.653-.248-1.274-.550-1.872-.892a.077.077 0 01-.008-.128c.126-.094.252-.192.372-.291a.074.074 0 01.078-.011c3.928 1.793 8.180 1.793 12.061 0a.074.074 0 01.079.010c.120.099.246.198.373.292a.077.077 0 01-.007.128 12.299 12.299 0 01-1.873.891.077.077 0 00-.041.107c.360.698.772 1.363 1.225 1.993a.076.076 0 00.084.029c1.961-.607 3.950-1.522 6.002-3.029a.077.077 0 00.031-.055c.500-5.177-.838-9.674-3.549-13.660a.061.061 0 00-.031-.029zM8.020 15.331c-1.183 0-2.157-1.086-2.157-2.419 0-1.333.956-2.419 2.157-2.419 1.211 0 2.176 1.095 2.157 2.419 0 1.333-.956 2.419-2.157 2.419zm7.975 0c-1.183 0-2.157-1.086-2.157-2.419 0-1.333.955-2.419 2.157-2.419 1.211 0 2.176 1.095 2.157 2.419 0 1.333-.946 2.419-2.157 2.419Z"/></svg></div>
  <i class="divider"></i>
  <div class="item wide"><svg viewBox="-58 -60 116 120"><g clip-path="url(#sq)"><rect x="-44" y="-44" width="88" height="88" fill="#fdfdfd"/><path d="M-44-20.500h88M-44-10.200h88M-44 .300h88M-44 11h88M-44 21.300h88M-44 31.700h88" stroke="#b5b5b5" stroke-width="1.300"/><path d="M-28.700-44v88" stroke="#f3b7b7" stroke-width="1.300"/></g><path d="M36-38-6 46 24 2z" fill="#777" opacity=".25"/><g transform="translate(36.500 -52) rotate(24.600)"><path d="M-3 0H3.500V7H-3z" fill="#8fb5d8"/><path d="M-6 7H6V55H-6z" fill="url(#gSteel)"/><path d="M4.500 8v44" stroke="#b08a50" stroke-width="1"/><path d="M-6 50H6L5.500 87H-5.500z" fill="url(#gGrip)"/><path d="M-6 80h11.500M-6 84h11.500" stroke="#6c7782"/><path d="M-5.500 87h11L1 107H-1z" fill="#a9a9ad"/><path d="M1 87h4.500L1 107z" fill="#4d4144"/><path d="M-9 10q-1-3 3-4v43q-3 1-3-1z" fill="#a5d0f0" stroke="#44566a" stroke-width=".8"/></g></svg></div>
  <div class="item wide"><svg viewBox="-58 -60 116 120"><rect x="-43.500" y="-43.500" width="87" height="87" rx="20" fill="#f2f2f3"/><clipPath id="pic"><rect x="-37" y="-37" width="74" height="74" rx="12"/></clipPath><g clip-path="url(#pic)"><rect x="-37" y="-37" width="74" height="42" fill="url(#gSky)"/><rect x="-37" y="3.300" width="74" height="12" fill="#2c4382"/><rect x="-37" y="13" width="74" height="25" fill="#9fb9dc"/><path d="M-37 12q14 2 22-1t20 3v7q-20 5-42 1z" fill="#5c83bd"/><path d="M-23 17q3-5 9-4l6 2 3 4-12 1zM-37 19l8-3 6 5-14 3z" fill="#3c3836"/><path d="M-37 25q10-3 18 0t20 2v7l-38-2z" fill="#eef3fa"/><path d="m-37 33 14-2 14 3 8 4h-36z" fill="#6c5640"/></g><path d="M3 17H38Q38 26 45 38 48 46 40 47H-1Q-8 46-5 38 3 26 3 17z" fill="url(#gGlass)"/><path d="M8 19H33L38 39H4z" fill="#f8f8f8"/><path d="m14 22 8-2 6 5-4 7-7-2zm-5 8 7 1 1 7-8 0zM22 33l7-4 4 7-9 3z" fill="#8d939b"/><path d="M-4 41Q20 49 44 41" stroke="#a6aaae" stroke-width="2" fill="none"/><path d="M.500 3Q.500-1 20-1T40 3V14Q40 18 20 18T.500 14z" fill="url(#gCap)"/><ellipse cx="20.200" cy="2.800" rx="18" ry="3" fill="#050505" stroke="#4a4a4a" stroke-width=".7"/></svg></div>
  <i class="divider"></i>
  <div class="item win"><svg viewBox="-58 -60 116 120"><rect x="-51" y="-30.500" width="102" height="60.500" fill="#050505"/><rect x="-32" y="-30.500" width="61" height="54" fill="url(#gHero)"/><path d="M-50 -28h13v4h-13z" fill="#1c1c1c"/><g fill="#888"><circle cx="-47.500" cy="-25.500" r="1.200" fill="#fff"/><circle cx="-47.500" cy="-14" r="1.300" fill="#e8e8e8"/><circle cx="-47.500" cy="-11" r="1.300" fill="#6d6ad0"/><path d="M-45-26h5v1h-5zM-45-22h4v1h-4zM-45-19h6v1h-6zM-45-14.500h6v1h-6zM-45-11.500h5v1h-5zM-48-7h7v.8h-7zM-48-4h6v.8h-6zM-48-1h7v.8h-7zM-48 2h7v.8h-7zM32-29h8v1h-8zM35-24h9v.8h-9zM35-22h11v.8h-11zM35-17h10v.8h-10z"/></g><rect x="-51" y="5" width="19" height="19" fill="#7e1d24"/><path d="M-29.500-23h15v1.600h-15zM-29.500-2.200H-7v1.400H-29.500z" fill="#ddd"/><g fill="#2b313d"><path d="M-30-19.500H-2.500V-13.500H-30zM-.500-19.500H27v6H-.500zM-30-12H-2.500V-6H-30zM-.500-12H27v6H-.500z"/></g><path d="M-30-19.500h6v6h-6z" fill="#6a6fae"/><path d="M-30-12h6v6h-6z" fill="#b01e35"/><path d="M-.500-19.500h6v6h-6z" fill="#53284f"/><path d="M-.500-12h6v6h-6z" fill="#9c4a40"/><path d="M-23-16.800h8M6.500-16.800h9M-23-9.200h8M6.500-9.200h6" stroke="#ccc"/><path d="M-29 2.500h16v15h-16z" fill="#293039"/><path d="M-9 2.500H7v15H-9z" fill="#7c988d"/><path d="M10.500 2.500h16v15h-16z" fill="#5375a5"/><path d="m-26 17 2-7 3-5 3 5 3 7zM-7 17l3-6 3-6 4 6 3 6zM12 17l3-10 4 3 3-3 3 10z" fill="#322e38"/><circle cx="-21" cy="7.500" r="2" fill="#c99c80"/><circle cx="-1" cy="6.500" r="2.400" fill="#d0a080"/><circle cx="15.500" cy="7" r="2" fill="#c09070"/><circle cx="22" cy="7" r="2" fill="#c09070"/><path d="M-27 14.500h12M-7 14.500H5M13 14.500h11" stroke="#d9c9a0"/><circle cy="26" r="1.400" fill="#fff"/><path d="M-16 29h30" stroke="#555"/><use href="#spotify" x="15.500" y="15.500" width="34" height="34"/></svg></div>
  <div class="item win"><svg viewBox="-58 -60 116 120"><ellipse cx=".400" cy="-38" rx="37.500" ry="8" fill="#5b5e60"/><path d="m-32-36 3-9 10-6 12 1 6 7 6-7 12 2 8 5 6 6-2 6-20 3-28 1z" fill="#e4e4e4"/><path d="m-28-42 12-3 9 4-8 3zM-12-49l12 5-4 2zM10-46l9 2-6 5zM22-42l7 2-5 5z" fill="#9b9b9b"/><path d="m-13-39 11-2-3 5-9 1z" fill="#40b8e8"/><path d="m-8-36 8-3v8h-6z" fill="#4c9f4a"/><path d="m3-40 10-4 5 7-6 6-9 1z" fill="#4c3a78"/><path d="m10-38 8-1-1 6-7 2z" fill="#c9552f"/><path d="m-20-37 10 1-1 6-8-2z" fill="#622c30"/><path d="M-37.500-40Q-35-29 .400-29T38.300-40L28 42Q26 48 0 48T-28 42z" fill="url(#gBin)"/><path d="M-37-38Q-30-30 .400-30T38-38" fill="none" stroke="#b0b3b5" stroke-width="1.300"/><path d="m-30-18 12 20-6 26zM10-28 22 0 8 30 16 40 28-20z" fill="#a0a3a5" opacity=".22"/><path d="M-27 38Q-24 44 0 44T27 38" fill="none" stroke="#a5a8aa" stroke-width="2" opacity=".6"/></svg></div>
</footer>
</body>
</html>
```
FILE: styles.css
```css
* { box-sizing: border-box; }
html, body { margin: 0; }
body {
  width: 2880px;
  height: 1800px;
  overflow: hidden;
  font-family: Inter, "Liberation Sans", sans-serif;
  background: linear-gradient(90deg, #03070f, #050d1a 70%, #0a1729);
  display: flex;
  flex-direction: column;
}
.defs { position: absolute; }
svg { display: block; flex: none; overflow: visible; }

/* Menu bar */
.menubar {
  height: 50px;
  flex: none;
  display: flex;
  justify-content: space-between;
  padding: 0 37px 0 44px;
  background: linear-gradient(90deg, #1d3562, #182f5c 30%, #10264e 50%, #0a1f42 72%, #071a3a);
  color: #e9ebef;
  font-size: 25px;
  line-height: 48px;
  white-space: nowrap;
}
.menus, .status { display: flex; align-items: flex-start; }
.menus svg { margin: 6px 45px 0 0; }
.menus b, .menus span { margin-right: 42px; font-weight: 500; }
.menus b { font-weight: 700; letter-spacing: .6px; }
.menus .m-window { margin-right: 39px; }
.status svg { margin-top: 12px; }
.status .s-keys { margin-left: 39px; }
.status .s-battery { margin: 11px 0 0 37px; }
.status .s-wifi { margin: 11px 0 0 35px; }
.status .s-search { margin-left: 38px; }
.status .s-control { margin-left: 38px; }
.status .s-siri { margin: 10px 32px 0 34px; }
.m-date { margin-right: 16px; font-weight: 500; letter-spacing: .25px; }
.m-time { font-weight: 500; font-variant-numeric: tabular-nums; letter-spacing: -.15px; }

/* Browser window */
.window {
  height: 1592px;
  flex: none;
  display: flex;
  flex-direction: column;
  overflow: hidden;
  border-radius: 20px;
  background: #343537;
  box-shadow: 0 -1px 0 #000;
}
.toolbar {
  height: 104px;
  flex: none;
  display: flex;
  align-items: center;
  border-top: 2px solid #6d6e70;
  border-left: 1px solid #6d6e70;
  border-radius: 20px 20px 0 0;
  padding-left: 39px;
}
.tools-left { display: flex; align-items: center; width: 757px; }
.light { width: 24px; height: 24px; border-radius: 50%; margin-right: 16px; }
.red { background: #ed6a5f; }
.amber { background: #f5bd4f; }
.green { background: #61c454; }
.t-sidebar { margin: 0 0 3px 36px; }
.t-back { margin: 0 0 3px 52px; }
.t-fwd { margin: 0 0 3px 54px; }
.t-shield { margin-bottom: 3px; }
.address {
  width: 1166px;
  height: 56px;
  margin-left: 32px;
  border-radius: 12px;
  background: #414244;
  display: flex;
  align-items: center;
  justify-content: space-between;
  padding: 0 12px 0 11px;
}
.url { color: #fff; font-size: 25px; font-weight: 500; padding-left: 4px; }
.tools-right { display: flex; align-items: center; margin-left: 642px; }
.t-share { margin-bottom: 7px; }
.t-plus { margin: 0 42px 4px 42px; }
.t-tabs { margin-bottom: 4px; }

/* Tabs */
.tabs {
  height: 57px;
  flex: none;
  display: flex;
  border-bottom: 2px solid #000;
}
.tab {
  width: 126px;
  flex: none;
  display: flex;
  align-items: center;
  padding: 0 0 0 42px;
  border-top: 1px solid #000;
  border-right: 2px solid #444446;
  background: #1d1d1e;
}
.tab svg { width: 36px; height: 36px; margin-top: 1px; }
.tab.narrow { width: 124px; padding-left: 40px; }
.tab.active {
  width: 238px;
  border: 0;
  padding: 3px 0 0 90px;
  background: #343537;
  color: #fff;
  font-size: 21px;
  font-weight: 500;
}

/* Page */
.page { flex: 1; display: flex; }
.welcome {
  width: 1440px;
  display: flex;
  flex-direction: column;
  align-items: center;
  justify-content: center;
  padding: 0 2px 2px 0;
  background: linear-gradient(90deg, #296786, #52607f 48%, #8c5b78);
  border-bottom: 2px solid #93839f;
  border-left: 1px solid #6b8fa4;
  color: #fff;
}
h1, p { margin: 0; }
h1 { font-size: 62px; line-height: 75px; font-weight: 700; letter-spacing: -.6px; padding-top: 1px; }
.welcome p { font-size: 31px; line-height: 35px; letter-spacing: -.29px; }
.btn {
  border: 0;
  padding: 0;
  background: #fff;
  color: #262626;
  font-family: inherit;
  font-size: 22px;
  border-radius: 8px;
}
.btn-welcome { width: 100px; height: 32px; line-height: 35px; box-shadow: 0 1px 2px rgba(0,0,0,.3); }
.signin {
  width: 1440px;
  background:
    linear-gradient(90deg, rgba(255,255,255,0) 1300px, #fff 1420px),
    linear-gradient(180deg, rgba(0,0,0,0) 1365px, rgba(0,0,0,.1)) #fff;
  color: #000;
}
.form { display: flex; align-items: flex-start; }
.field {
  width: 294px;
  height: 40px;
  background: #eee;
  border-top: 2px solid #e2e2e2;
  border-bottom: 2px solid #b4b4b4;
  border-right: 1px solid #d6d6d6;
  padding-left: 6px;
  color: #adadad;
  font-size: 22px;
  line-height: 40px;
}
.form a { color: #0a22e0; font-size: 31px; line-height: 35px; letter-spacing: -.27px; text-decoration: underline; }
.btn-form { width: 97px; height: 32px; margin: 3px 0 0 4px; line-height: 36px; box-shadow: 0 0 0 1px #e4e4e4, 0 2px 2px rgba(0,0,0,.3); }

/* Dock */
.dock {
  width: 2684px;
  height: 138px;
  margin: 10px 0 0 98px;
  flex: none;
  display: flex;
  align-items: flex-start;
  padding: 2px 0 0 4px;
  border: 2px solid #3a434e;
  border-radius: 40px;
  background: #17202c;
}
.item {
  width: 116.680px;
  flex: none;
  display: flex;
  flex-direction: column;
  align-items: center;
}
.item svg { width: 116px; height: 120px; }
.item.wide { width: 118px; }
.item.win { width: 116px; }
.dot { width: 8px; height: 8px; margin-top: 2px; border-radius: 50%; background: #9aa1ae; }
.divider { width: 2px; height: 102px; margin: 14px 23px 0 25px; background: #5b6470; flex: none; }
.badge { font-size: 24px; font-weight: 500; fill: #fff; text-anchor: middle; }
.cal-month { font-size: 17.500px; font-weight: 600; fill: #fff; text-anchor: middle; }
.cal-day { font-size: 52px; font-weight: 300; fill: #222; text-anchor: middle; }
.prompt { font-family: "Liberation Mono", monospace; font-size: 22px; font-weight: 700; fill: #fff; }
.petals ellipse { mix-blend-mode: multiply; opacity: .92; }
.petals { isolation: isolate; }
```
